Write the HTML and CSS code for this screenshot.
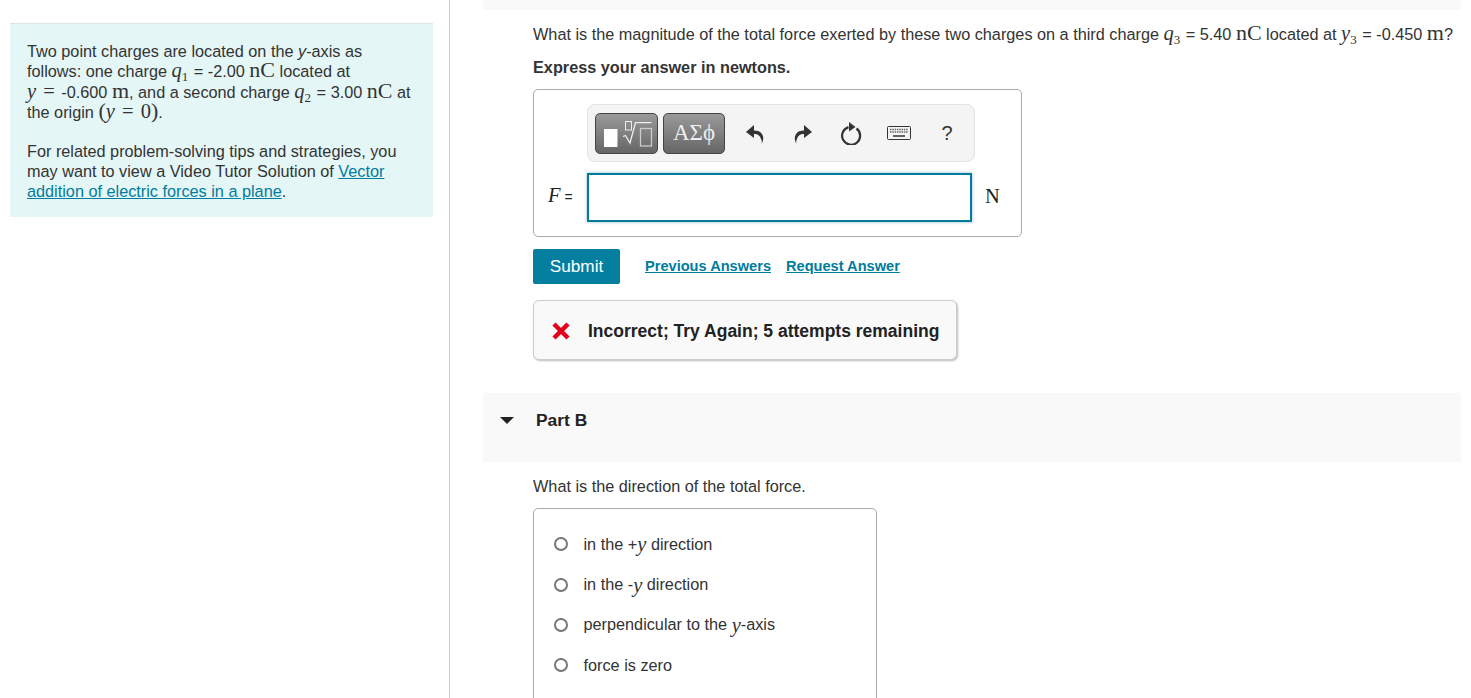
FILE: index.html
```html
<!DOCTYPE html>
<html lang="en">
<head>
    <meta charset="UTF-8">
    <meta name="viewport" content="width=device-width, initial-scale=1.0">
    <title>Two point charges</title>
    <link rel="stylesheet" href="styles.css">
</head>
<body>
    <div class="page">
        <div class="left-col">
            <div class="intro">
                <p>Two point charges are located on the <em>y</em>-axis as<br>follows: one charge <span class="m"><i>q</i><sub>1</sub></span> = -2.00 <span class="m u">nC</span> located at<br><span class="m"><i>y</i> <span class="eq">=</span></span> -0.600 <span class="m u">m</span>, and a second charge <span class="m"><i>q</i><sub>2</sub></span> = 3.00 <span class="m u">nC</span> at<br>the origin <span class="m"><span class="paren">(</span><i>y</i> <span class="eq">=</span> 0<span class="paren">)</span></span>.</p>
                <p>For related problem-solving tips and strategies, you<br>may want to view a Video Tutor Solution of <a href="#">Vector<br>addition of electric forces in a plane</a>.</p>
            </div>
        </div>

        <div class="right-col">
            <div class="top-band"></div>
            <div class="part">
                <p class="question">What is the magnitude of the total force exerted by these two charges on a third charge <span class="m"><i>q</i><sub>3</sub></span> = 5.40 <span class="m u">nC</span> located at <span class="m"><i>y</i><sub>3</sub></span> = -0.450 <span class="m u">m</span>?</p>
                <p class="express">Express your answer in newtons.</p>

                <div class="answer-box">
                    <div class="toolbar">
                        <div class="tpl-btn tpl-math">
                            <svg width="61" height="39" viewBox="0 0 61 39">
                                <rect x="8" y="15" width="13.500" height="18" fill="#fff"/>
                                <rect x="29.500" y="7.500" width="6" height="8.500" fill="none" stroke="#eee"/>
                                <path d="M27 22.500l2.500-1 4.500 7.500 5.500-20.300h16" fill="none" stroke="#eee" stroke-width="1.300"/>
                                <rect x="44.500" y="14.500" width="11" height="17.500" fill="none" stroke="#ccc" stroke-width="1.300"/>
                            </svg>
                        </div>
                        <div class="tpl-btn tpl-greek">ΑΣϕ</div>
                        <div class="tool undo">
                            <svg width="20" height="22" viewBox="0 0 20 22"><path d="M9 3L1 10l8 6v-4c4 0 6 1.500 7 5 1 2 1 3 .5 5 2-3 2.500-7 .5-10-1.500-2.500-4-3.500-8-3.500z" fill="#333"/></svg>
                        </div>
                        <div class="tool redo">
                            <svg width="20" height="22" viewBox="0 0 20 22"><path d="M11 3l8 7-8 6v-4c-4 0-6 1.500-7 5-1 2-1 3-.5 5-2-3-2.500-7-.5-10 1.500-2.500 4-3.500 8-3.500z" fill="#333"/></svg>
                        </div>
                        <div class="tool reset">
                            <svg width="22" height="24" viewBox="0 0 22 24"><path d="M16.500 7.500a9 9 0 1 1-8-1.400" fill="none" stroke="#333" stroke-width="2.200"/><path d="M9 1l6.500 5L9 10.500z" fill="#333"/></svg>
                        </div>
                        <div class="tool keys">
                            <svg width="24" height="14" viewBox="0 0 24 14"><rect x=".5" y=".5" width="23" height="13" rx="1" fill="#f4f4f4" stroke="#333"/><path d="M3 3.500h18M3 6h18" stroke="#666" stroke-width="1.500" stroke-dasharray="1.500 .8"/><path d="M6 10h12" stroke="#333" stroke-width="1.500"/></svg>
                        </div>
                        <div class="tool help">?</div>
                    </div>
                    <div class="input-row">
                        <span class="f-label"><span class="m"><i>F</i></span> =</span>
                        <div class="answer-input"></div>
                        <span class="m unit">N</span>
                    </div>
                </div>

                <div class="actions">
                    <button class="submit">Submit</button>
                    <a href="#" class="action-link first">Previous Answers</a>
                    <a href="#" class="action-link">Request Answer</a>
                </div>

                <div class="feedback">
                    <svg width="18" height="18" viewBox="0 0 18 18"><path d="M2 2l14 14M16 2L2 16" stroke="#e2001a" stroke-width="4.500"/></svg>
                    <span>Incorrect; Try Again; 5 attempts remaining</span>
                </div>
            </div>

            <div class="part-head">
                <span class="caret"></span>
                <span class="part-title">Part B</span>
            </div>

            <div class="part">
                <p class="question-b">What is the direction of the total force.</p>
                <div class="options">
                    <label class="option"><span class="radio"></span>in the +<span class="m"><i>y</i></span>&nbsp;direction</label>
                    <label class="option"><span class="radio"></span>in the -<span class="m"><i>y</i></span>&nbsp;direction</label>
                    <label class="option"><span class="radio"></span>perpendicular to the&nbsp;<span class="m"><i>y</i></span>-axis</label>
                    <label class="option"><span class="radio"></span>force is zero</label>
                </div>
            </div>
        </div>
    </div>
</body>
</html>
```

FILE: styles.css
```css
html, body { margin: 0; padding: 0; height: 698px; overflow: hidden; background: #fff; }
body { font-family: "Liberation Sans", Arial, sans-serif; font-size: 16.250px; color: #333; }
p { margin: 0; }
a { color: #007c9e; }

.page { display: flex; height: 698px; }
.left-col { width: 423px; flex: none; border-right: 1px solid #c5d0dc; padding: 23px 16px 0 10px; }
.right-col { flex: none; width: 978px; margin-left: 33px; }

.intro { background: #e5f6f7; border-top: 1px solid #dbe5e6; padding: 17px 16px 16px 17px; line-height: 20.400px; height: 160px; white-space: nowrap; }
.intro p + p { margin-top: 18px; }

.m { font-family: "Liberation Serif", "DejaVu Serif", serif; font-size: 20.500px; line-height: 0; }
.m.u { font-size: 22px; }
.m sub { font-size: 13px; line-height: 0; vertical-align: -4px; margin-right: 1px; }
.eq { margin: 0 2px; }
.paren { font-size: 22px; }

.top-band { height: 10px; background: #f9f9f9; }
.part { padding-left: 50px; }
.question { margin-top: 14px; line-height: 20px; white-space: nowrap; }
.express { margin-top: 13px; line-height: 20px; font-weight: bold; }

.answer-box { width: 487px; height: 132px; margin-top: 12px; border: 1px solid #aaa; border-radius: 5px; padding-top: 14px; }
.toolbar { display: flex; align-items: center; margin-left: 53px; width: 379px; height: 56px; background: #f4f4f4; border: 1px solid #e2e2e2; border-radius: 8px; padding-left: 7px; }
.tpl-btn { height: 41px; box-sizing: border-box; border: 1px solid #444; border-radius: 5px; background: linear-gradient(#999, #666); color: #eee; display: flex; align-items: center; justify-content: center; }
.tpl-math { width: 63px; }
.tpl-greek { width: 62px; margin-left: 5px; font-family: "Liberation Serif", serif; font-size: 23px; }
.tool { width: 48px; display: flex; justify-content: center; align-items: center; height: 40px; color: #333; }
.undo { margin-left: 6px; }
.help { font-size: 20px; }
.input-row { display: flex; align-items: center; margin-top: 11px; }
.f-label { width: 53px; box-sizing: border-box; padding-left: 14px; margin-bottom: 2px; font-size: 14px; color: #222; white-space: nowrap; }
.answer-input { width: 381px; height: 45px; background: #fff; border: 2px solid #047a9c; box-shadow: 0 0 3px #7fbccd; }
.unit { margin-left: 13px; margin-bottom: 3px; color: #222; }

.actions { display: flex; align-items: center; margin-top: 12px; }
.submit { width: 87px; height: 35px; background: #047fa0; color: #fff; border: 0; border-radius: 2px; font-family: inherit; font-size: 17.200px; padding: 0; }
.action-link { font-size: 14.600px; font-weight: bold; margin-left: 15px; margin-bottom: 2px; }
.action-link.first { margin-left: 25px; }

.feedback { display: flex; align-items: center; gap: 18px; width: 424px; height: 60px; box-sizing: border-box; margin-top: 16px; padding-left: 18px; padding-top: 2px; background: #f9f9f9; border: 1px solid #ccc; border-radius: 6px; box-shadow: 1px 1px 2px #bbb; font-weight: bold; font-size: 17.500px; color: #222; white-space: nowrap; }

.part-head { display: flex; align-items: center; height: 69px; margin-top: 33px; padding-bottom: 14px; box-sizing: border-box; background: #f9f9f9; }
.caret { width: 0; height: 0; margin-left: 17px; border-left: 7px solid transparent; border-right: 7px solid transparent; border-top: 7px solid #222; }
.part-title { margin-left: 22px; font-weight: bold; font-size: 17.400px; color: #222; }

.question-b { margin-top: 14px; line-height: 20px; }
.options { width: 342px; height: 200px; margin-top: 12px; border: 1px solid #aaa; border-radius: 5px; padding-top: 15px; }
.option { display: flex; align-items: center; height: 40.400px; padding-left: 20px; }
.radio { width: 10px; height: 10px; border: 2px solid #777; border-radius: 50%; margin-right: 15.500px; flex: none; }
```
